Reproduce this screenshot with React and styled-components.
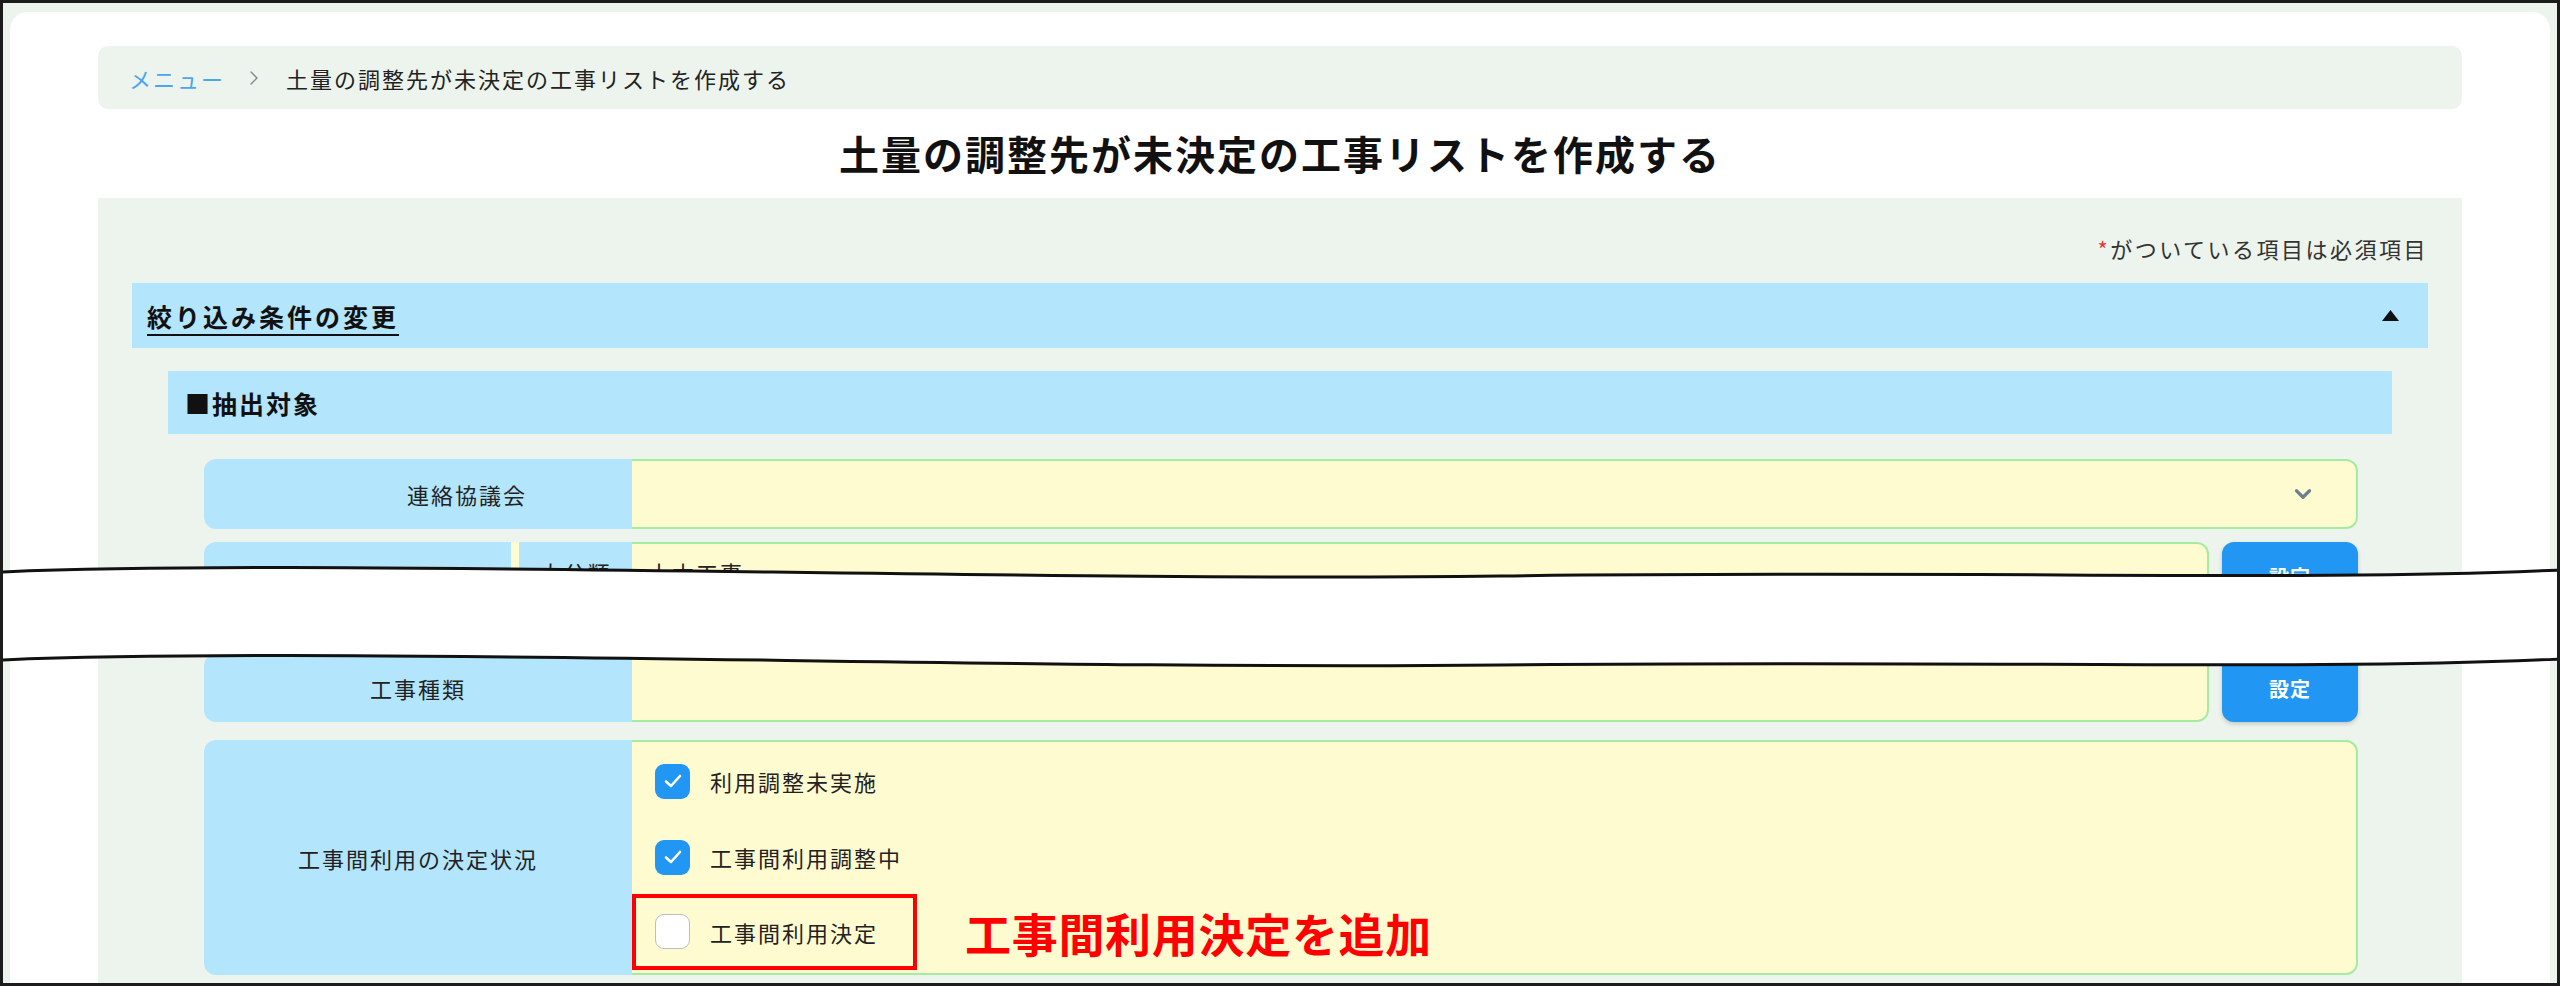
import React from "react";
import styled, { createGlobalStyle } from "styled-components";
import { ChevronDown, ChevronRight } from "lucide-react";

const GlobalStyle = createGlobalStyle`
  html, body {
    margin: 0;
    padding: 0;
    background: #fff;
  }
  body {
    font-family: "Noto Sans CJK JP", "Noto Sans", sans-serif;
    color: #222;
  }
`;

const Frame = styled.div`
  position: relative;
  box-sizing: border-box;
  width: 2560px;
  height: 986px;
  border: 3px solid #1c1c1c;
  background: #edf4ed;
  padding: 9px 7px 0 7px;
  overflow: hidden;
  display: flex;
`;

const Card = styled.div`
  flex: 1;
  display: flex;
  flex-direction: column;
  background: #fff;
  border-radius: 18px 18px 0 0;
  padding: 34px 88px 0;
`;

const Breadcrumb = styled.nav`
  height: 63px;
  flex-shrink: 0;
  display: flex;
  align-items: center;
  padding-left: 31px;
  border-radius: 10px;
  background: #edf4ed;
  font-size: 22px;
  letter-spacing: 2px;
`;

const CrumbLink = styled.span`
  color: #4ba6f0;
`;

const CrumbSep = styled.span`
  display: flex;
  margin: 0 20px 0 17px;
  color: #7d8a8f;
`;

const PageTitle = styled.h1`
  margin: 0;
  height: 89px;
  line-height: 89px;
  flex-shrink: 0;
  text-align: center;
  font-size: 40px;
  font-weight: 700;
  letter-spacing: 2px;
  color: #111;
`;

const Panel = styled.section`
  flex: 1;
  background: #edf4ed;
  padding: 30px 34px 0;
`;

const RequiredNote = styled.div`
  text-align: right;
  font-size: 22px;
  line-height: 40px;
  letter-spacing: 2.5px;
  color: #333;
  margin-bottom: 15px;
`;

const Mark = styled.span`
  color: #e53935;
`;

const SectionBar = styled.div`
  height: 65px;
  display: flex;
  align-items: center;
  justify-content: space-between;
  padding: 0 29px 0 15px;
  background: #b3e5fc;
`;

const SectionTitle = styled.span`
  font-size: 25px;
  font-weight: 700;
  letter-spacing: 3px;
  text-decoration: underline;
  text-decoration-thickness: 2px;
  text-underline-offset: 7px;
  color: #111;
`;

const GroupBar = styled.div`
  height: 63px;
  margin: 23px 36px 0;
  display: flex;
  align-items: center;
  padding-left: 17px;
  background: #b3e5fc;
  font-size: 25px;
  font-weight: 700;
  letter-spacing: 2px;
  color: #111;
`;

const Rows = styled.div`
  display: flex;
  flex-direction: column;
  gap: 13px;
  margin: 25px 70px 0 72px;
`;

const Row = styled.div`
  display: flex;
  height: ${(p) => p.$h}px;
  margin-top: ${(p) => p.$gap || 0}px;
`;

const Label = styled.div`
  width: ${(p) => p.$w || 428}px;
  flex-shrink: 0;
  display: flex;
  align-items: ${(p) => (p.$top ? "flex-start" : "center")};
  justify-content: center;
  padding-top: ${(p) => (p.$top ? "14px" : "0")};
  padding-left: ${(p) => p.$shift || 0}px;
  box-sizing: border-box;
  background: #b3e5fc;
  border-radius: ${(p) => (p.$first ? "12px 0 0 12px" : "0")};
  font-size: 22px;
  letter-spacing: 2px;
  color: #222;
`;

const Spacer = styled.div`
  width: 8px;
  flex-shrink: 0;
  background: #fffbd0;
`;

const Field = styled.div`
  flex: 1;
  display: flex;
  flex-direction: ${(p) => (p.$column ? "column" : "row")};
  align-items: ${(p) => (p.$column ? "stretch" : p.$top ? "flex-start" : "center")};
  padding: ${(p) => (p.$column ? "1px 0 2px" : p.$top ? "12px 0 0 16px" : "0 18px")};
  background: #fffbd0;
  border: 2px solid #a5eba0;
  border-left: none;
  border-radius: 0 12px 12px 0;
  font-size: 22px;
  letter-spacing: 2px;
  color: #222;
`;

const SelectArrow = styled.span`
  margin-left: auto;
  margin-right: 22px;
  display: flex;
  color: #6e8090;
`;

const SetButton = styled.button`
  width: 136px;
  height: 68px;
  margin-left: 13px;
  flex-shrink: 0;
  align-self: ${(p) => (p.$top ? "flex-start" : "flex-end")};
  border: none;
  border-radius: 12px;
  background: #2196f3;
  color: #fff;
  font-family: inherit;
  font-size: 20px;
  font-weight: 700;
  letter-spacing: 1px;
  box-shadow: 0 2px 4px rgba(0, 0, 0, 0.18);
`;

const OptionLine = styled.div`
  height: 76px;
  display: flex;
  align-items: center;
`;

const Option = styled.label`
  box-sizing: border-box;
  height: 76px;
  display: flex;
  align-items: center;
  gap: 20px;
  padding-left: ${(p) => (p.$marked ? "19px" : "23px")};
  width: ${(p) => (p.$marked ? "285px" : "auto")};
  margin-top: ${(p) => (p.$marked ? "-3px" : "0")};
  border: ${(p) => (p.$marked ? "4px solid #ff0000" : "none")};
  font-size: 22px;
  letter-spacing: 2px;
  color: #222;
`;

const Box = styled.span`
  box-sizing: border-box;
  width: 35px;
  height: 35px;
  flex-shrink: 0;
  display: flex;
  align-items: center;
  justify-content: center;
  border-radius: 9px;
  background: ${(p) => (p.$checked ? "#2196f3" : "#fff")};
  border: ${(p) => (p.$checked ? "none" : "1.5px solid #b9c0c4")};
`;

const AddNote = styled.span`
  margin-left: 48px;
  margin-top: -3px;
  color: #ff0000;
  font-size: 46px;
  font-weight: 700;
  letter-spacing: 0.7px;
`;

const CutBand = styled.svg`
  position: absolute;
  left: 0;
  top: 537px;
  width: 2554px;
  height: 150px;
  pointer-events: none;
`;

const Triangle = () => (
  <svg width="17" height="11" viewBox="0 0 17 11">
    <path d="M8.5 0 L17 11 L0 11 Z" fill="#111" />
  </svg>
);

const Check = () => (
  <svg width="20" height="16" viewBox="0 0 20 16">
    <path
      d="M3 8.5 L8 13 L17 3"
      fill="none"
      stroke="#fff"
      strokeWidth="2.6"
      strokeLinecap="round"
      strokeLinejoin="round"
    />
  </svg>
);

const Checkbox = ({ checked, label, marked }) => (
  <Option $marked={marked}>
    <Box $checked={checked}>{checked && <Check />}</Box>
    {label}
  </Option>
);

// the white "cut" band drawn across the form, with wavy black edges
const topLine = "M0 572 C 350 558, 1000 582, 1500 576 C 2000 570, 2300 582, 2560 570";
const bottomLine = "M0 660 C 350 646, 1000 670, 1500 665 C 2000 660, 2300 671, 2560 659";
const bandFill =
  "M0 572 C 350 558, 1000 582, 1500 576 C 2000 570, 2300 582, 2560 570 " +
  "L2560 659 C 2300 671, 2000 660, 1500 665 C 1000 670, 350 646, 0 660 Z";

const App = () => {
  const title = "土量の調整先が未決定の工事リストを作成する";

  return (
    <>
      <GlobalStyle />
      <Frame>
        <Card>
          <Breadcrumb>
            <CrumbLink>メニュー</CrumbLink>
            <CrumbSep>
              <ChevronRight size={24} strokeWidth={1.4} />
            </CrumbSep>
            <span>{title}</span>
          </Breadcrumb>

          <PageTitle>{title}</PageTitle>

          <Panel>
            <RequiredNote>
              <Mark>*</Mark>がついている項目は必須項目
            </RequiredNote>

            <SectionBar>
              <SectionTitle>絞り込み条件の変更</SectionTitle>
              <Triangle />
            </SectionBar>

            <GroupBar>■抽出対象</GroupBar>

            <Rows>
              <Row $h={70}>
                <Label $first $shift={98}>連絡協議会</Label>
                <Field>
                  <SelectArrow>
                    <ChevronDown size={26} strokeWidth={3} />
                  </SelectArrow>
                </Field>
              </Row>

              <Row $h={99}>
                <Label $first $w={307}>工種</Label>
                <Spacer />
                <Label $w={113} $top>大分類</Label>
                <Field $top>土木工事</Field>
                <SetButton $top>設定</SetButton>
              </Row>

              <Row $h={68}>
                <Label $first>工事種類</Label>
                <Field />
                <SetButton>設定</SetButton>
              </Row>

              <Row $h={235} $gap={5}>
                <Label $first>工事間利用の決定状況</Label>
                <Field $column>
                  <OptionLine>
                    <Checkbox checked label="利用調整未実施" />
                  </OptionLine>
                  <OptionLine>
                    <Checkbox checked label="工事間利用調整中" />
                  </OptionLine>
                  <OptionLine>
                    <Checkbox marked label="工事間利用決定" />
                    <AddNote>工事間利用決定を追加</AddNote>
                  </OptionLine>
                </Field>
              </Row>
            </Rows>
          </Panel>
        </Card>

        <CutBand viewBox="3 540 2554 150">
          <path d={bandFill} fill="#fff" />
          <path d={topLine} fill="none" stroke="#111" strokeWidth="3" />
          <path d={bottomLine} fill="none" stroke="#111" strokeWidth="3" />
        </CutBand>
      </Frame>
    </>
  );
};

export default App;
